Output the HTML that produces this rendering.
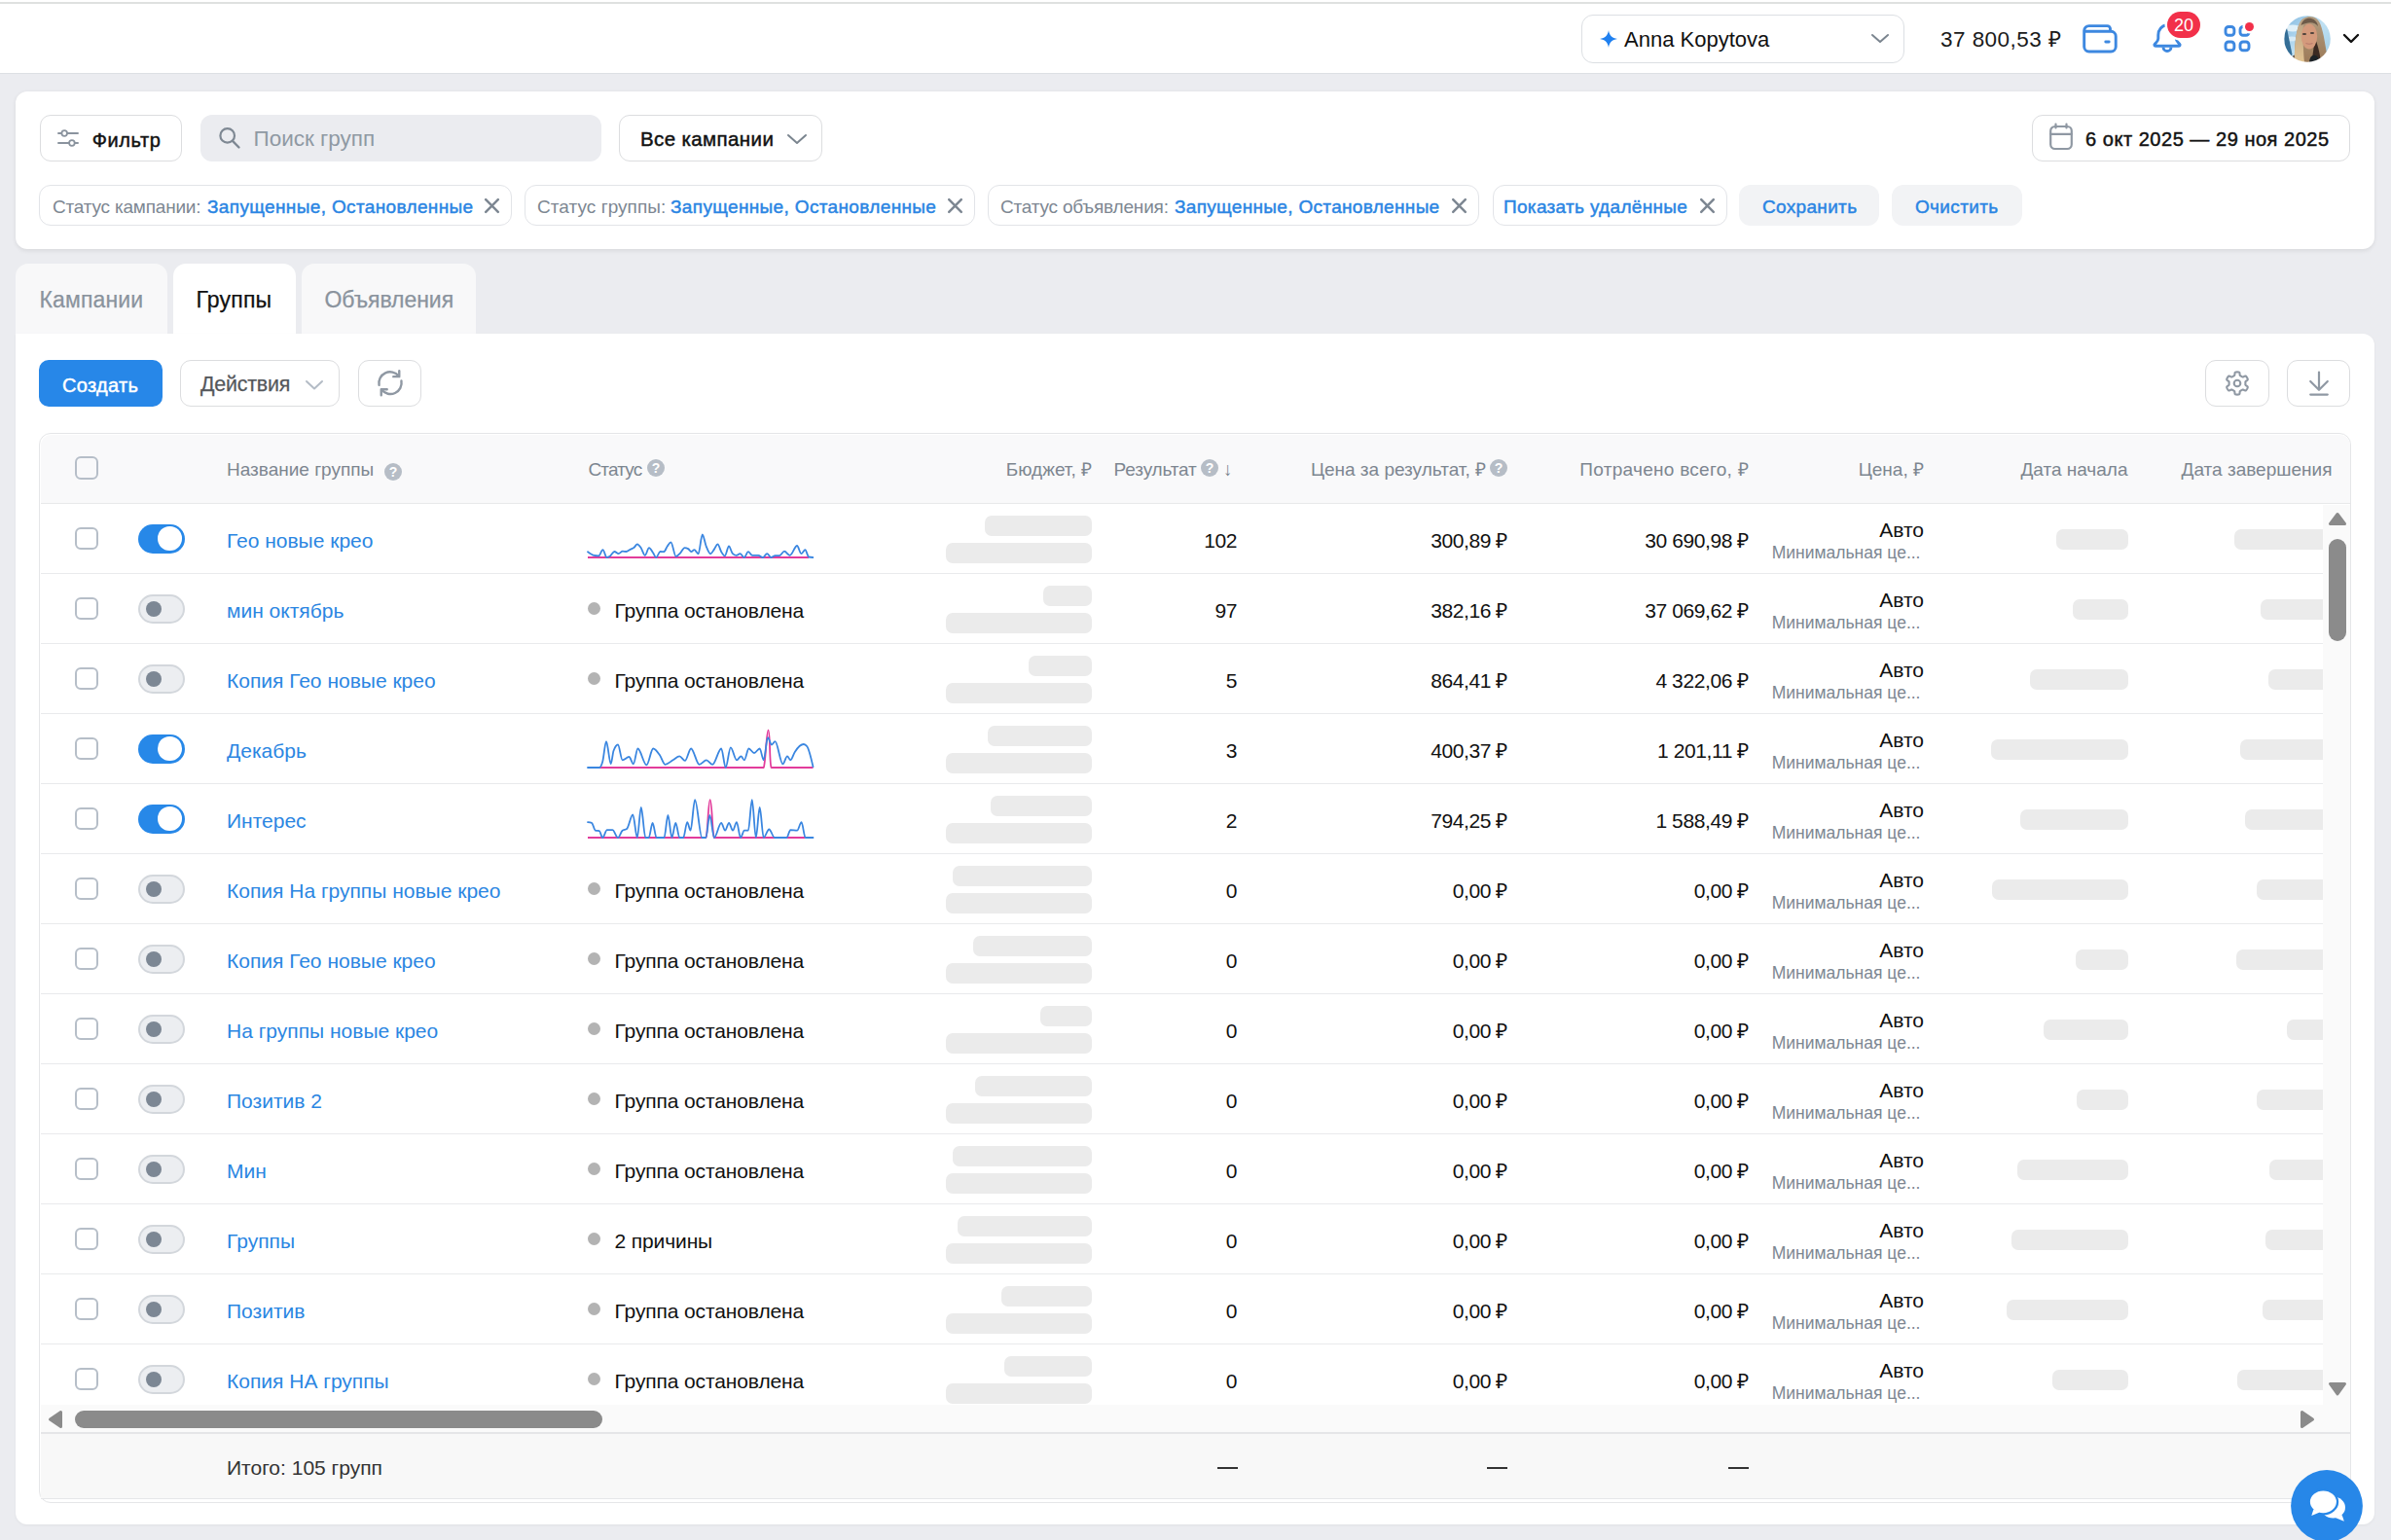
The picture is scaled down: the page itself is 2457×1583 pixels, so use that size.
<!DOCTYPE html><html><head><meta charset="utf-8"><style>html,body{margin:0;padding:0;}body{width:2457px;height:1583px;position:relative;overflow:hidden;background:#ebecf0;font-family:"Liberation Sans", sans-serif;}</style></head><body><div style="position:absolute;left:0px;top:0px;width:2457px;height:76px;background:#fff;"></div>
<div style="position:absolute;left:0px;top:2px;width:2457px;height:2px;background:#dfe1e0;"></div>
<div style="position:absolute;left:0px;top:75px;width:2457px;height:1px;background:#dde0e4;"></div>
<div style="position:absolute;left:1625px;top:15px;width:332px;height:49.5px;border:1.5px solid #dcdfe3;border-radius:12px;box-sizing:border-box;background:#fff;"></div>
<svg style="position:absolute;left:1644px;top:31px;" width="18" height="18" viewBox="0 0 18 18"><path d="M9 0 C9.8 5.5 12.5 8.2 18 9 C12.5 9.8 9.8 12.5 9 18 C8.2 12.5 5.5 9.8 0 9 C5.5 8.2 8.2 5.5 9 0Z" fill="#1f80f0"/></svg>
<div style="position:absolute;left:1669.00px;top:30.38px;font-size:22px;line-height:22px;color:#111;font-weight:400;white-space:nowrap;">Anna Kopytova</div>
<svg style="position:absolute;left:1922px;top:34px;" width="20" height="12" viewBox="0 0 20 12"><path d="M2 2 L10 9 L18 2" fill="none" stroke="#7b858f" stroke-width="2" stroke-linecap="round" stroke-linejoin="round"/></svg>
<div style="position:absolute;left:1994.00px;top:30.45px;font-size:22.5px;line-height:22.5px;color:#1a1a1a;font-weight:400;white-space:nowrap;letter-spacing:0.45px;">37 800,53 ₽</div>
<svg style="position:absolute;left:2139px;top:23px;" width="40" height="34" viewBox="0 0 40 34"><path d="M2.7 8.6 A5 5 0 0 1 7.7 3.6 H26.5 A3 3 0 0 1 29.5 6.6 V9.3 H30.2 A5 5 0 0 1 35.2 14.3 V25 A5 5 0 0 1 30.2 30 H7.7 A5 5 0 0 1 2.7 25 Z M2.7 9.3 H30" fill="none" stroke="#3d88e0" stroke-width="2.9" stroke-linejoin="round"/><path d="M24.8 20 H28.2" stroke="#3d88e0" stroke-width="2.9" stroke-linecap="round"/></svg>
<svg style="position:absolute;left:2210px;top:24px;" width="34" height="34" viewBox="0 0 34 34"><path d="M17 2 C11.5 2 7.8 6.5 7.8 12 V15.5 C7.8 17 7 18.5 5.5 20 L4.3 21.3 C3.3 22.4 4 23.3 5.5 23.3 H28.5 C30 23.3 30.7 22.4 29.7 21.3 L28.5 20 C27 18.5 26.2 17 26.2 15.5 V12 C26.2 6.5 22.5 2 17 2 Z" fill="none" stroke="#3d88e0" stroke-width="2.9" stroke-linejoin="round"/><path d="M13 24.5 A4 4 0 0 0 21 24.5" fill="none" stroke="#3d88e0" stroke-width="2.9"/></svg>
<div style="position:absolute;left:2227px;top:12px;width:34px;height:27px;background:#f2304a;border-radius:14px;box-shadow:0 0 0 2.5px #fff;"></div>
<div style="position:absolute;left:2244.00px;top:17.26px;font-size:18px;line-height:18px;color:#fff;font-weight:400;white-space:nowrap;transform:translateX(-50%);">20</div>
<svg style="position:absolute;left:2283px;top:24px;" width="36" height="34" viewBox="0 0 36 34"><rect x="4" y="3.5" width="8.9" height="8.8" rx="3" fill="none" stroke="#3d88e0" stroke-width="2.9"/><rect x="4" y="19" width="8.9" height="8.8" rx="3" fill="none" stroke="#3d88e0" stroke-width="2.9"/><rect x="19" y="19" width="9" height="8.8" rx="3" fill="none" stroke="#3d88e0" stroke-width="2.9"/><path d="M22 3.5 A3 3 0 0 0 19 6.5 V9.3 A3 3 0 0 0 22 12.3 H25 A3 3 0 0 0 28 9.3 V9" fill="none" stroke="#3d88e0" stroke-width="2.9" stroke-linecap="round"/></svg>
<div style="position:absolute;left:2307px;top:23px;width:9px;height:9px;background:#f2304a;border-radius:50%;box-shadow:0 0 0 2.5px #fff;"></div>
<svg style="position:absolute;left:2347px;top:15.5px;" width="48" height="48" viewBox="0 0 48 48"><defs><filter id="avb"><feGaussianBlur stdDeviation="0.45"/></filter><clipPath id="av"><circle cx="24" cy="24" r="23.8"/></clipPath><linearGradient id="sky" x1="0" y1="0" x2="1" y2="1"><stop offset="0" stop-color="#7fb7df"/><stop offset="0.5" stop-color="#bfe0f2"/><stop offset="1" stop-color="#9ccbe6"/></linearGradient><linearGradient id="hairL" x1="0" y1="0" x2="0" y2="1"><stop offset="0" stop-color="#b8a184"/><stop offset="1" stop-color="#e2c493"/></linearGradient><linearGradient id="hairR" x1="0" y1="0" x2="0" y2="1"><stop offset="0" stop-color="#b29c80"/><stop offset="1" stop-color="#9c7a58"/></linearGradient></defs><g clip-path="url(#av)"><g filter="url(#avb)"><rect x="-2" y="-2" width="52" height="52" fill="url(#sky)"/><ellipse cx="9" cy="13" rx="8" ry="3.5" fill="#e8f4fa" opacity="0.9"/><ellipse cx="8" cy="24" rx="6" ry="2.5" fill="#e8f4fa" opacity="0.7"/><path d="M0.5 14 L3 13 L8.5 40 L5 45 L0 44 Z" fill="#356e96"/><path d="M3 48 L6 43 L12 40 L14 48 Z" fill="#5b5046"/><path d="M11 48 C10.5 34 12 16 16 8 C18.5 3 22 1 27 1 C32 1 35.5 4 37.5 9 C41 18 43 34 45.5 48 Z" fill="url(#hairR)"/><path d="M11 48 C10.5 34 12 16 16 8 C17.5 5 19 3.5 21 2.5 C19 10 19.5 30 21 48 Z" fill="url(#hairL)"/><path d="M31.5 22 C34 28 37 38 38 48 L28 48 C30 40 31 30 31.5 22Z" fill="#3b2b22"/><ellipse cx="26" cy="21.5" rx="8.2" ry="13" fill="#d49a7c"/><path d="M17.5 10 C19 4 24 2 28 3 C32 4 34.5 7 35 11 C32 7 26 5.5 17.5 10Z" fill="#6d5a48"/><ellipse cx="21" cy="19" rx="2.2" ry="1.1" fill="#4a3e3a"/><ellipse cx="29" cy="18" rx="2.2" ry="1.1" fill="#4a3e3a"/><path d="M22.5 28.5 Q26 30 29.5 28.5" stroke="#b87a6c" stroke-width="1.2" fill="none"/><path d="M26 48 C26.5 42 29 40 33 41 C35 42 36 45 36 48 Z" fill="#1f2326"/></g></g></svg>
<svg style="position:absolute;left:2406px;top:33px;" width="20" height="14" viewBox="0 0 20 14"><path d="M3 3 L10 10 L17 3" fill="none" stroke="#111" stroke-width="2.4" stroke-linecap="round" stroke-linejoin="round"/></svg>
<div style="position:absolute;left:16px;top:94px;width:2424px;height:162px;background:#fff;border-radius:12px;box-shadow:0 1.5px 4px rgba(0,0,0,0.08);"></div>
<div style="position:absolute;left:41px;top:118px;width:146px;height:48px;border:1.7px solid #dcdddf;border-radius:11px;box-sizing:border-box;"></div>
<svg style="position:absolute;left:56px;top:128px;" width="28" height="28" viewBox="0 0 28 28"><path d="M4 9 H24 M4 19 H24" stroke="#8a939e" stroke-width="1.9" stroke-linecap="round"/><circle cx="10.2" cy="9" r="2.8" fill="#fff" stroke="#8a939e" stroke-width="1.8"/><circle cx="17.9" cy="19" r="2.8" fill="#fff" stroke="#8a939e" stroke-width="1.8"/></svg>
<div style="position:absolute;left:94.70px;top:133.57px;font-size:20px;line-height:20px;color:#111;font-weight:400;white-space:nowrap;letter-spacing:0.6px;-webkit-text-stroke:0.45px #111;">Фильтр</div>
<div style="position:absolute;left:206px;top:118px;width:412px;height:48px;background:#ebecf0;border-radius:12px;"></div>
<svg style="position:absolute;left:222px;top:128px;" width="28" height="28" viewBox="0 0 28 28"><circle cx="11.7" cy="11.4" r="7.3" fill="none" stroke="#7e8893" stroke-width="2.2"/><path d="M17 16.8 L23.5 23.5" stroke="#7e8893" stroke-width="2.4" stroke-linecap="round"/></svg>
<div style="position:absolute;left:260.50px;top:131.85px;font-size:22.5px;line-height:22.5px;color:#8f99a3;font-weight:400;white-space:nowrap;">Поиск групп</div>
<div style="position:absolute;left:636px;top:118px;width:209px;height:48px;border:1.7px solid #dcdddf;border-radius:11px;box-sizing:border-box;"></div>
<div style="position:absolute;left:658.00px;top:133.35px;font-size:20.5px;line-height:20.5px;color:#111;font-weight:400;white-space:nowrap;letter-spacing:0.38px;-webkit-text-stroke:0.45px #111;">Все кампании</div>
<svg style="position:absolute;left:806px;top:134px;" width="26" height="18" viewBox="0 0 26 18"><path d="M4 5 L13 13 L22 5" fill="none" stroke="#7b858f" stroke-width="2" stroke-linecap="round" stroke-linejoin="round"/></svg>
<div style="position:absolute;left:2088px;top:118px;width:327px;height:48px;border:1.7px solid #dcdddf;border-radius:11px;box-sizing:border-box;"></div>
<svg style="position:absolute;left:2104px;top:125px;" width="28" height="32" viewBox="0 0 28 32"><rect x="3.2" y="5" width="21.6" height="23" rx="4.5" fill="none" stroke="#8f98a3" stroke-width="2.2"/><path d="M3.2 12.8 H24.8 M8.5 2.5 V6.5 M19.5 2.5 V6.5" stroke="#8f98a3" stroke-width="2.2" stroke-linecap="round"/></svg>
<div style="position:absolute;left:2143.00px;top:133.37px;font-size:20px;line-height:20px;color:#111;font-weight:400;white-space:nowrap;letter-spacing:0.53px;-webkit-text-stroke:0.45px #111;">6 окт 2025 — 29 ноя 2025</div>
<div style="position:absolute;left:40px;top:190px;width:486px;height:42px;border:1.5px solid #e2e4e8;border-radius:12px;box-sizing:border-box;background:#fff;"></div>
<svg style="position:absolute;left:495.5px;top:202px;" width="20" height="20" viewBox="0 0 20 20"><path d="M3.2 3.2 L15.8 15.8 M15.8 3.2 L3.2 15.8" stroke="#7d8792" stroke-width="2.5" stroke-linecap="round"/></svg>
<div style="position:absolute;left:54.00px;top:202.52px;font-size:19px;line-height:19px;color:#7d8792;font-weight:400;white-space:nowrap;letter-spacing:-0.2px;">Статус кампании: </div>
<div style="position:absolute;left:213.00px;top:202.52px;font-size:19px;line-height:19px;color:#2a85e3;font-weight:400;white-space:nowrap;letter-spacing:0.36px;-webkit-text-stroke:0.45px #2a85e3;">Запущенные, Остановленные</div>
<div style="position:absolute;left:539px;top:190px;width:463px;height:42px;border:1.5px solid #e2e4e8;border-radius:12px;box-sizing:border-box;background:#fff;"></div>
<svg style="position:absolute;left:971.5px;top:202px;" width="20" height="20" viewBox="0 0 20 20"><path d="M3.2 3.2 L15.8 15.8 M15.8 3.2 L3.2 15.8" stroke="#7d8792" stroke-width="2.5" stroke-linecap="round"/></svg>
<div style="position:absolute;left:552.00px;top:202.52px;font-size:19px;line-height:19px;color:#7d8792;font-weight:400;white-space:nowrap;letter-spacing:0.05px;">Статус группы: </div>
<div style="position:absolute;left:689.00px;top:202.52px;font-size:19px;line-height:19px;color:#2a85e3;font-weight:400;white-space:nowrap;letter-spacing:0.35px;-webkit-text-stroke:0.45px #2a85e3;">Запущенные, Остановленные</div>
<div style="position:absolute;left:1015px;top:190px;width:505px;height:42px;border:1.5px solid #e2e4e8;border-radius:12px;box-sizing:border-box;background:#fff;"></div>
<svg style="position:absolute;left:1489.5px;top:202px;" width="20" height="20" viewBox="0 0 20 20"><path d="M3.2 3.2 L15.8 15.8 M15.8 3.2 L3.2 15.8" stroke="#7d8792" stroke-width="2.5" stroke-linecap="round"/></svg>
<div style="position:absolute;left:1028.00px;top:202.52px;font-size:19px;line-height:19px;color:#7d8792;font-weight:400;white-space:nowrap;letter-spacing:-0.2px;">Статус объявления: </div>
<div style="position:absolute;left:1207.00px;top:202.52px;font-size:19px;line-height:19px;color:#2a85e3;font-weight:400;white-space:nowrap;letter-spacing:0.32px;-webkit-text-stroke:0.45px #2a85e3;">Запущенные, Остановленные</div>
<div style="position:absolute;left:1534px;top:190px;width:241px;height:42px;border:1.5px solid #e2e4e8;border-radius:12px;box-sizing:border-box;background:#fff;"></div>
<svg style="position:absolute;left:1744.5px;top:202px;" width="20" height="20" viewBox="0 0 20 20"><path d="M3.2 3.2 L15.8 15.8 M15.8 3.2 L3.2 15.8" stroke="#7d8792" stroke-width="2.5" stroke-linecap="round"/></svg>
<div style="position:absolute;left:1545.00px;top:202.52px;font-size:19px;line-height:19px;color:#2a85e3;font-weight:400;white-space:nowrap;letter-spacing:0.32px;-webkit-text-stroke:0.45px #2a85e3;">Показать удалённые</div>
<div style="position:absolute;left:1787px;top:190px;width:144px;height:42px;background:#f2f3f5;border-radius:12px;"></div>
<div style="position:absolute;left:1811.00px;top:202.52px;font-size:19px;line-height:19px;color:#2a85e3;font-weight:400;white-space:nowrap;letter-spacing:0.33px;-webkit-text-stroke:0.45px #2a85e3;">Сохранить</div>
<div style="position:absolute;left:1944px;top:190px;width:134px;height:42px;background:#f2f3f5;border-radius:12px;"></div>
<div style="position:absolute;left:1968.00px;top:202.52px;font-size:19px;line-height:19px;color:#2a85e3;font-weight:400;white-space:nowrap;letter-spacing:0.34px;-webkit-text-stroke:0.45px #2a85e3;">Очистить</div>
<div style="position:absolute;left:16px;top:271px;width:156px;height:79px;background:#f8f8f9;border-radius:13px 13px 0 0;"></div>
<div style="position:absolute;left:178px;top:271px;width:126px;height:79px;background:#fff;border-radius:13px 13px 0 0;"></div>
<div style="position:absolute;left:310px;top:271px;width:179px;height:79px;background:#f8f8f9;border-radius:13px 13px 0 0;"></div>
<div style="position:absolute;left:40.50px;top:297.03px;font-size:23px;line-height:23px;color:#8a939d;font-weight:400;white-space:nowrap;letter-spacing:0.15px;-webkit-text-stroke:0.25px #8a939d;">Кампании</div>
<div style="position:absolute;left:201.50px;top:297.03px;font-size:23px;line-height:23px;color:#111;font-weight:400;white-space:nowrap;letter-spacing:0.2px;-webkit-text-stroke:0.25px #111;">Группы</div>
<div style="position:absolute;left:333.50px;top:297.03px;font-size:23px;line-height:23px;color:#8a939d;font-weight:400;white-space:nowrap;letter-spacing:-0.05px;-webkit-text-stroke:0.25px #8a939d;">Объявления</div>
<div style="position:absolute;left:16px;top:343px;width:2424px;height:1224px;background:#fff;border-radius:0 12px 12px 12px;box-shadow:0 1px 3px rgba(0,0,0,0.05);"></div>
<div style="position:absolute;left:40px;top:370px;width:127px;height:48px;background:#2787e8;border-radius:10px;"></div>
<div style="position:absolute;left:64.00px;top:386.07px;font-size:20px;line-height:20px;color:#fff;font-weight:400;white-space:nowrap;letter-spacing:0.3px;-webkit-text-stroke:0.45px #fff;">Создать</div>
<div style="position:absolute;left:185px;top:370px;width:164px;height:48px;border:1.7px solid #dcdddf;border-radius:11px;box-sizing:border-box;"></div>
<div style="position:absolute;left:206.00px;top:384.68px;font-size:21.4px;line-height:21.4px;color:#54575b;font-weight:400;white-space:nowrap;letter-spacing:-0.2px;-webkit-text-stroke:0.25px #54575b;">Действия</div>
<svg style="position:absolute;left:310px;top:387px;" width="26" height="18" viewBox="0 0 26 18"><path d="M5 5 L13 12.5 L21 5" fill="none" stroke="#b4bcc6" stroke-width="2" stroke-linecap="round" stroke-linejoin="round"/></svg>
<div style="position:absolute;left:368px;top:370px;width:65px;height:48px;border:1.7px solid #dcdddf;border-radius:11px;box-sizing:border-box;"></div>
<svg style="position:absolute;left:385px;top:379px;" width="32" height="30" viewBox="0 0 32 30"><g transform="translate(16 15) scale(1.09) translate(-16 -15.3)"><path d="M5.5 17 A10.5 10.5 0 0 1 24 8.5" fill="none" stroke="#8f98a3" stroke-width="2.2" stroke-linecap="round"/><path d="M26.5 13 A10.5 10.5 0 0 1 8 21.5" fill="none" stroke="#8f98a3" stroke-width="2.2" stroke-linecap="round"/><path d="M24.5 3.5 V9 H19" fill="none" stroke="#8f98a3" stroke-width="2.2" stroke-linecap="round" stroke-linejoin="round"/><path d="M7.5 26.5 V21 H13" fill="none" stroke="#8f98a3" stroke-width="2.2" stroke-linecap="round" stroke-linejoin="round"/></g></svg>
<div style="position:absolute;left:2266px;top:370px;width:66px;height:48px;border:1.7px solid #dcdddf;border-radius:11px;box-sizing:border-box;"></div>
<div style="position:absolute;left:2350px;top:370px;width:65px;height:48px;border:1.7px solid #dcdddf;border-radius:11px;box-sizing:border-box;"></div>
<svg style="position:absolute;left:2283px;top:377.5px;" width="32" height="32" viewBox="0 0 32 32"><path d="M24.40 16.00 L24.40 15.71 L24.38 15.41 L24.37 15.12 L24.36 14.83 L24.39 14.52 L24.59 14.17 L25.20 13.71 L26.11 13.10 L26.67 12.53 L26.79 12.07 L26.72 11.67 L26.59 11.29 L26.42 10.92 L26.24 10.55 L26.05 10.20 L25.84 9.85 L25.61 9.52 L25.37 9.19 L25.11 8.88 L24.79 8.62 L24.33 8.50 L23.57 8.69 L22.59 9.18 L21.88 9.47 L21.48 9.47 L21.20 9.35 L20.94 9.19 L20.70 9.03 L20.45 8.88 L20.20 8.73 L19.94 8.58 L19.68 8.45 L19.42 8.31 L19.16 8.18 L18.91 7.99 L18.71 7.64 L18.61 6.89 L18.54 5.79 L18.33 5.03 L17.99 4.69 L17.61 4.55 L17.21 4.48 L16.81 4.43 L16.40 4.41 L16.00 4.40 L15.60 4.41 L15.19 4.43 L14.79 4.48 L14.39 4.55 L14.01 4.69 L13.67 5.03 L13.46 5.79 L13.39 6.89 L13.29 7.64 L13.09 7.99 L12.84 8.18 L12.58 8.31 L12.32 8.45 L12.06 8.58 L11.80 8.73 L11.55 8.88 L11.30 9.03 L11.06 9.19 L10.80 9.35 L10.52 9.47 L10.12 9.47 L9.41 9.18 L8.43 8.69 L7.67 8.50 L7.21 8.62 L6.89 8.88 L6.63 9.19 L6.39 9.52 L6.16 9.85 L5.95 10.20 L5.76 10.55 L5.58 10.92 L5.41 11.29 L5.28 11.67 L5.21 12.07 L5.33 12.53 L5.89 13.10 L6.80 13.71 L7.41 14.17 L7.61 14.52 L7.64 14.83 L7.63 15.12 L7.62 15.41 L7.60 15.71 L7.60 16.00 L7.60 16.29 L7.62 16.59 L7.63 16.88 L7.64 17.17 L7.61 17.48 L7.41 17.83 L6.80 18.29 L5.89 18.90 L5.33 19.47 L5.21 19.93 L5.28 20.33 L5.41 20.71 L5.58 21.08 L5.76 21.45 L5.95 21.80 L6.16 22.15 L6.39 22.48 L6.63 22.81 L6.89 23.12 L7.21 23.38 L7.67 23.50 L8.43 23.31 L9.41 22.82 L10.12 22.53 L10.52 22.53 L10.80 22.65 L11.06 22.81 L11.30 22.97 L11.55 23.12 L11.80 23.27 L12.06 23.42 L12.32 23.55 L12.58 23.69 L12.84 23.82 L13.09 24.01 L13.29 24.36 L13.39 25.11 L13.46 26.21 L13.67 26.97 L14.01 27.31 L14.39 27.45 L14.79 27.52 L15.19 27.57 L15.60 27.59 L16.00 27.60 L16.40 27.59 L16.81 27.57 L17.21 27.52 L17.61 27.45 L17.99 27.31 L18.33 26.97 L18.54 26.21 L18.61 25.11 L18.71 24.36 L18.91 24.01 L19.16 23.82 L19.42 23.69 L19.68 23.55 L19.94 23.42 L20.20 23.27 L20.45 23.12 L20.70 22.97 L20.94 22.81 L21.20 22.65 L21.48 22.53 L21.88 22.53 L22.59 22.82 L23.57 23.31 L24.33 23.50 L24.79 23.38 L25.11 23.12 L25.37 22.81 L25.61 22.48 L25.84 22.15 L26.05 21.80 L26.24 21.45 L26.42 21.08 L26.59 20.71 L26.72 20.33 L26.79 19.93 L26.67 19.47 L26.11 18.90 L25.20 18.29 L24.59 17.83 L24.39 17.48 L24.36 17.17 L24.37 16.88 L24.38 16.59 L24.40 16.29 Z" fill="none" stroke="#8f98a3" stroke-width="2.1" stroke-linejoin="round"/><circle cx="16" cy="16" r="3.3" fill="none" stroke="#8f98a3" stroke-width="2.1"/></svg>
<svg style="position:absolute;left:2367px;top:372px;" width="32" height="40" viewBox="0 0 32 40"><path d="M16 10.5 V28.5 M7.2 20 L16 28.8 L24.8 20 M7.2 33.6 H24.8" fill="none" stroke="#8f98a3" stroke-width="2.2" stroke-linecap="round" stroke-linejoin="round"/></svg>
<div style="position:absolute;left:40px;top:445px;width:2376px;height:1099.5px;border:1.5px solid #e5e6e8;border-radius:12px;box-sizing:border-box;background:#fff;"></div>
<div style="position:absolute;left:41.5px;top:446.5px;width:2373.0px;height:70.5px;background:#f9f9fa;border-radius:11px 11px 0 0;"></div>
<div style="position:absolute;left:41.5px;top:517px;width:2373.0px;height:1.2000000000000455px;background:#e8e9ea;"></div>
<div style="position:absolute;left:77.0px;top:469.0px;width:23.599999999999994px;height:23.600000000000023px;border:2px solid #b6bec8;border-radius:6px;box-sizing:border-box;"></div>
<div style="position:absolute;left:233.00px;top:473.32px;font-size:19px;line-height:19px;color:#7d8690;font-weight:400;white-space:nowrap;">Название группы</div>
<svg style="position:absolute;left:395px;top:476px;" width="18" height="18" viewBox="0 0 18 18"><circle cx="9.0" cy="9.0" r="9.0" fill="#b6bdc6"/><text x="9.0" y="13.86" text-anchor="middle" font-family="Liberation Sans" font-weight="700" font-size="14.040000000000001" fill="#fff">?</text></svg>
<div style="position:absolute;left:604.50px;top:473.32px;font-size:19px;line-height:19px;color:#7d8690;font-weight:400;white-space:nowrap;letter-spacing:-0.85px;">Статус</div>
<svg style="position:absolute;left:665px;top:472px;" width="18" height="18" viewBox="0 0 18 18"><circle cx="9.0" cy="9.0" r="9.0" fill="#b6bdc6"/><text x="9.0" y="13.86" text-anchor="middle" font-family="Liberation Sans" font-weight="700" font-size="14.040000000000001" fill="#fff">?</text></svg>
<div style="position:absolute;left:322.00px;width:800px;text-align:right;top:473.32px;font-size:19px;line-height:19px;color:#7d8690;font-weight:400;white-space:nowrap;">Бюджет, ₽</div>
<div style="position:absolute;left:1144.60px;top:473.32px;font-size:19px;line-height:19px;color:#7d8690;font-weight:400;white-space:nowrap;letter-spacing:-0.15px;">Результат</div>
<svg style="position:absolute;left:1234px;top:472px;" width="18" height="18" viewBox="0 0 18 18"><circle cx="9.0" cy="9.0" r="9.0" fill="#b6bdc6"/><text x="9.0" y="13.86" text-anchor="middle" font-family="Liberation Sans" font-weight="700" font-size="14.040000000000001" fill="#fff">?</text></svg>
<div style="position:absolute;left:1257.00px;top:473.32px;font-size:19px;line-height:19px;color:#7d8690;font-weight:400;white-space:nowrap;">↓</div>
<div style="position:absolute;left:727.00px;width:800px;text-align:right;top:473.32px;font-size:19px;line-height:19px;color:#7d8690;font-weight:400;white-space:nowrap;">Цена за результат, ₽</div>
<svg style="position:absolute;left:1531px;top:472px;" width="18" height="18" viewBox="0 0 18 18"><circle cx="9.0" cy="9.0" r="9.0" fill="#b6bdc6"/><text x="9.0" y="13.86" text-anchor="middle" font-family="Liberation Sans" font-weight="700" font-size="14.040000000000001" fill="#fff">?</text></svg>
<div style="position:absolute;left:997.00px;width:800px;text-align:right;top:473.32px;font-size:19px;line-height:19px;color:#7d8690;font-weight:400;white-space:nowrap;letter-spacing:0.28px;margin-right:-0.28px;">Потрачено всего, ₽</div>
<div style="position:absolute;left:1177.00px;width:800px;text-align:right;top:473.32px;font-size:19px;line-height:19px;color:#7d8690;font-weight:400;white-space:nowrap;">Цена, ₽</div>
<div style="position:absolute;left:1386.50px;width:800px;text-align:right;top:473.32px;font-size:19px;line-height:19px;color:#7d8690;font-weight:400;white-space:nowrap;">Дата начала</div>
<div style="position:absolute;left:2241.60px;top:473.32px;font-size:19px;line-height:19px;color:#7d8690;font-weight:400;white-space:nowrap;">Дата завершения</div>
<div style="position:absolute;left:41.5px;top:588.5px;width:2345.5px;height:1.5px;background:#e9eaec;"></div>
<div style="position:absolute;left:77.0px;top:541.7px;width:23.599999999999994px;height:23.59999999999991px;border:2px solid #b6bec8;border-radius:6px;box-sizing:border-box;"></div>
<div style="position:absolute;left:142px;top:538.5px;width:48px;height:30.0px;background:#2788e8;border-radius:15px;"></div>
<div style="position:absolute;left:162.3px;top:541.4px;width:24.5px;height:24.5px;background:#fff;border-radius:50%;"></div>
<div style="position:absolute;left:233.00px;top:545.22px;font-size:21px;line-height:21px;color:#2b86e2;font-weight:400;white-space:nowrap;">Гео новые крео</div>
<svg style="position:absolute;left:600px;top:528.4px;" width="240" height="50" viewBox="0 0 240 50"><path d="M4.0 45 H231.1" fill="none" stroke="#e23c9b" stroke-width="1.8" stroke-linejoin="round"/><path d="M4.00 39.20 C6.17 40.82 8.33 42.44 10.50 42.90 C12.07 43.23 13.63 43.40 15.20 43.40 C16.60 43.40 18.00 37.20 19.40 37.20 C20.80 37.20 22.20 45.00 23.60 45.00 C24.77 45.00 25.93 44.23 27.10 43.40 C28.53 42.38 29.97 39.00 31.40 39.00 C32.80 39.00 34.20 41.10 35.60 41.10 C37.00 41.10 38.40 38.70 39.80 38.70 C41.00 38.70 42.20 39.00 43.40 39.00 C44.97 39.00 46.53 37.36 48.10 36.60 C49.17 36.08 50.23 35.88 51.30 35.10 C52.50 34.22 53.70 31.40 54.90 31.40 C56.13 31.40 57.37 33.37 58.60 35.10 C60.00 37.06 61.40 42.90 62.80 42.90 C64.20 42.90 65.60 35.10 67.00 35.10 C68.37 35.10 69.73 38.41 71.10 40.30 C72.17 41.77 73.23 45.00 74.30 45.00 C75.67 45.00 77.03 39.00 78.40 39.00 C79.63 39.00 80.87 39.20 82.10 39.20 C83.33 39.20 84.57 35.17 85.80 33.50 C87.00 31.88 88.20 29.30 89.40 29.30 C91.13 29.30 92.87 44.00 94.60 44.00 C96.00 44.00 97.40 42.16 98.80 40.80 C100.37 39.27 101.93 35.10 103.50 35.10 C104.73 35.10 105.97 35.43 107.20 36.10 C108.23 36.66 109.27 39.20 110.30 39.20 C111.37 39.20 112.43 37.20 113.50 37.20 C114.87 37.20 116.23 41.30 117.60 41.30 C119.00 41.30 120.40 21.50 121.80 21.50 C123.03 21.50 124.27 29.90 125.50 33.00 C127.07 36.94 128.63 41.30 130.20 41.30 C131.43 41.30 132.67 38.28 133.90 36.60 C135.10 34.97 136.30 31.40 137.50 31.40 C138.73 31.40 139.97 37.19 141.20 39.20 C142.40 41.16 143.60 43.40 144.80 43.40 C146.20 43.40 147.60 33.50 149.00 33.50 C150.23 33.50 151.47 39.57 152.70 40.80 C154.10 42.20 155.50 42.90 156.90 42.90 C158.10 42.90 159.30 41.10 160.50 41.10 C161.90 41.10 163.30 45.00 164.70 45.00 C166.10 45.00 167.50 39.20 168.90 39.20 C170.27 39.20 171.63 42.90 173.00 42.90 C175.10 42.90 177.20 42.90 179.30 42.90 C180.87 42.90 182.43 45.00 184.00 45.00 C185.40 45.00 186.80 41.10 188.20 41.10 C189.60 41.10 191.00 45.00 192.40 45.00 C193.80 45.00 195.20 43.20 196.60 43.20 C198.00 43.20 199.40 43.20 200.80 43.20 C202.53 43.20 204.27 38.70 206.00 38.70 C207.90 38.70 209.80 42.90 211.70 42.90 C214.17 42.90 216.63 33.00 219.10 33.00 C220.50 33.00 221.90 41.10 223.30 41.10 C224.67 41.10 226.03 37.20 227.40 37.20 C228.63 37.20 229.87 44.21 231.10 44.50 C232.50 44.83 233.90 44.92 235.30 45.00" fill="none" stroke="#3a86e0" stroke-width="1.8" stroke-linejoin="round" stroke-linecap="round"/></svg>
<div style="position:absolute;left:1012px;top:530.0px;width:110px;height:21.0px;background:#ebebeb;border-radius:7px;"></div>
<div style="position:absolute;left:972px;top:558.0px;width:150px;height:21.0px;background:#ebebeb;border-radius:7px;"></div>
<div style="position:absolute;left:471.00px;width:800px;text-align:right;top:545.22px;font-size:21px;line-height:21px;color:#111;font-weight:400;white-space:nowrap;letter-spacing:-0.4px;margin-right:-0.4px;">102</div>
<div style="position:absolute;left:749.00px;width:800px;text-align:right;top:545.22px;font-size:21px;line-height:21px;color:#111;font-weight:400;white-space:nowrap;letter-spacing:-0.4px;margin-right:-0.4px;">300,89 ₽</div>
<div style="position:absolute;left:997.00px;width:800px;text-align:right;top:545.22px;font-size:21px;line-height:21px;color:#111;font-weight:400;white-space:nowrap;letter-spacing:-0.4px;margin-right:-0.4px;">30 690,98 ₽</div>
<div style="position:absolute;left:1177.00px;width:800px;text-align:right;top:534.02px;font-size:21px;line-height:21px;color:#111;font-weight:400;white-space:nowrap;">Авто</div>
<div style="position:absolute;left:1173.50px;width:800px;text-align:right;top:560.19px;font-size:17.5px;line-height:17.5px;color:#7d8792;font-weight:400;white-space:nowrap;">Минимальная це...</div>
<div style="position:absolute;left:2113px;top:544.0px;width:74px;height:20.5px;background:#ebebeb;border-radius:7px;"></div>
<div style="position:absolute;left:2296px;top:544.0px;width:91px;height:20.5px;background:#ebebeb;border-radius:7px 0 0 7px;"></div>
<div style="position:absolute;left:41.5px;top:660.5px;width:2345.5px;height:1.5px;background:#e9eaec;"></div>
<div style="position:absolute;left:77.0px;top:613.7px;width:23.599999999999994px;height:23.59999999999991px;border:2px solid #b6bec8;border-radius:6px;box-sizing:border-box;"></div>
<div style="position:absolute;left:142px;top:610.5px;width:48px;height:30.0px;background:#eceef1;border:2.2px solid #d3d7dc;border-radius:15px;box-sizing:border-box;"></div>
<div style="position:absolute;left:149.5px;top:617.5px;width:16.0px;height:16.0px;background:#7c8794;border-radius:50%;"></div>
<div style="position:absolute;left:233.00px;top:617.22px;font-size:21px;line-height:21px;color:#2b86e2;font-weight:400;white-space:nowrap;">мин октябрь</div>
<div style="position:absolute;left:603.5px;top:619.0px;width:13.0px;height:13.0px;background:#b3b3b3;border-radius:50%;"></div>
<div style="position:absolute;left:631.50px;top:617.22px;font-size:21px;line-height:21px;color:#111;font-weight:400;white-space:nowrap;letter-spacing:-0.12px;">Группа остановлена</div>
<div style="position:absolute;left:1072px;top:602.0px;width:50px;height:21.0px;background:#ebebeb;border-radius:7px;"></div>
<div style="position:absolute;left:972px;top:630.0px;width:150px;height:21.0px;background:#ebebeb;border-radius:7px;"></div>
<div style="position:absolute;left:471.00px;width:800px;text-align:right;top:617.22px;font-size:21px;line-height:21px;color:#111;font-weight:400;white-space:nowrap;letter-spacing:-0.4px;margin-right:-0.4px;">97</div>
<div style="position:absolute;left:749.00px;width:800px;text-align:right;top:617.22px;font-size:21px;line-height:21px;color:#111;font-weight:400;white-space:nowrap;letter-spacing:-0.4px;margin-right:-0.4px;">382,16 ₽</div>
<div style="position:absolute;left:997.00px;width:800px;text-align:right;top:617.22px;font-size:21px;line-height:21px;color:#111;font-weight:400;white-space:nowrap;letter-spacing:-0.4px;margin-right:-0.4px;">37 069,62 ₽</div>
<div style="position:absolute;left:1177.00px;width:800px;text-align:right;top:606.02px;font-size:21px;line-height:21px;color:#111;font-weight:400;white-space:nowrap;">Авто</div>
<div style="position:absolute;left:1173.50px;width:800px;text-align:right;top:632.19px;font-size:17.5px;line-height:17.5px;color:#7d8792;font-weight:400;white-space:nowrap;">Минимальная це...</div>
<div style="position:absolute;left:2130px;top:616.0px;width:57px;height:20.5px;background:#ebebeb;border-radius:7px;"></div>
<div style="position:absolute;left:2323px;top:616.0px;width:64px;height:20.5px;background:#ebebeb;border-radius:7px 0 0 7px;"></div>
<div style="position:absolute;left:41.5px;top:732.5px;width:2345.5px;height:1.5px;background:#e9eaec;"></div>
<div style="position:absolute;left:77.0px;top:685.7px;width:23.599999999999994px;height:23.59999999999991px;border:2px solid #b6bec8;border-radius:6px;box-sizing:border-box;"></div>
<div style="position:absolute;left:142px;top:682.5px;width:48px;height:30.0px;background:#eceef1;border:2.2px solid #d3d7dc;border-radius:15px;box-sizing:border-box;"></div>
<div style="position:absolute;left:149.5px;top:689.5px;width:16.0px;height:16.0px;background:#7c8794;border-radius:50%;"></div>
<div style="position:absolute;left:233.00px;top:689.22px;font-size:21px;line-height:21px;color:#2b86e2;font-weight:400;white-space:nowrap;">Копия Гео новые крео</div>
<div style="position:absolute;left:603.5px;top:691.0px;width:13.0px;height:13.0px;background:#b3b3b3;border-radius:50%;"></div>
<div style="position:absolute;left:631.50px;top:689.22px;font-size:21px;line-height:21px;color:#111;font-weight:400;white-space:nowrap;letter-spacing:-0.12px;">Группа остановлена</div>
<div style="position:absolute;left:1057px;top:674.0px;width:65px;height:21.0px;background:#ebebeb;border-radius:7px;"></div>
<div style="position:absolute;left:972px;top:702.0px;width:150px;height:21.0px;background:#ebebeb;border-radius:7px;"></div>
<div style="position:absolute;left:471.00px;width:800px;text-align:right;top:689.22px;font-size:21px;line-height:21px;color:#111;font-weight:400;white-space:nowrap;letter-spacing:-0.4px;margin-right:-0.4px;">5</div>
<div style="position:absolute;left:749.00px;width:800px;text-align:right;top:689.22px;font-size:21px;line-height:21px;color:#111;font-weight:400;white-space:nowrap;letter-spacing:-0.4px;margin-right:-0.4px;">864,41 ₽</div>
<div style="position:absolute;left:997.00px;width:800px;text-align:right;top:689.22px;font-size:21px;line-height:21px;color:#111;font-weight:400;white-space:nowrap;letter-spacing:-0.4px;margin-right:-0.4px;">4 322,06 ₽</div>
<div style="position:absolute;left:1177.00px;width:800px;text-align:right;top:678.02px;font-size:21px;line-height:21px;color:#111;font-weight:400;white-space:nowrap;">Авто</div>
<div style="position:absolute;left:1173.50px;width:800px;text-align:right;top:704.19px;font-size:17.5px;line-height:17.5px;color:#7d8792;font-weight:400;white-space:nowrap;">Минимальная це...</div>
<div style="position:absolute;left:2086px;top:688.0px;width:101px;height:20.5px;background:#ebebeb;border-radius:7px;"></div>
<div style="position:absolute;left:2331px;top:688.0px;width:56px;height:20.5px;background:#ebebeb;border-radius:7px 0 0 7px;"></div>
<div style="position:absolute;left:41.5px;top:804.5px;width:2345.5px;height:1.5px;background:#e9eaec;"></div>
<div style="position:absolute;left:77.0px;top:757.7px;width:23.599999999999994px;height:23.59999999999991px;border:2px solid #b6bec8;border-radius:6px;box-sizing:border-box;"></div>
<div style="position:absolute;left:142px;top:754.5px;width:48px;height:30.0px;background:#2788e8;border-radius:15px;"></div>
<div style="position:absolute;left:162.3px;top:757.4px;width:24.5px;height:24.5px;background:#fff;border-radius:50%;"></div>
<div style="position:absolute;left:233.00px;top:761.22px;font-size:21px;line-height:21px;color:#2b86e2;font-weight:400;white-space:nowrap;">Декабрь</div>
<svg style="position:absolute;left:600px;top:744px;" width="240" height="50" viewBox="0 0 240 50"><path d="M15.9 45 H184.7 C186.7 42 187.5 6.3 189.5 6.3 C191.5 6.3 190.6 42 192.6 45 H235.5" fill="none" stroke="#e23c9b" stroke-width="1.8" stroke-linejoin="round"/><path d="M4.00 45.00 C7.97 45.00 11.93 45.00 15.90 45.00 C17.00 45.00 18.10 42.88 19.20 39.00 C20.47 34.53 21.73 18.10 23.00 18.10 C24.57 18.10 26.13 41.30 27.70 41.30 C28.63 41.30 29.57 30.27 30.50 27.70 C32.00 23.57 33.50 21.50 35.00 21.50 C36.53 21.50 38.07 37.30 39.60 37.30 C41.87 37.30 44.13 34.00 46.40 34.00 C47.90 34.00 49.40 41.30 50.90 41.30 C52.40 41.30 53.90 25.50 55.40 25.50 C58.40 25.50 61.40 42.40 64.40 42.40 C66.67 42.40 68.93 25.50 71.20 25.50 C73.47 25.50 75.73 29.06 78.00 32.20 C79.87 34.79 81.73 41.80 83.60 41.80 C86.23 41.80 88.87 38.81 91.50 37.30 C93.77 36.00 96.03 33.40 98.30 33.40 C100.17 33.40 102.03 37.90 103.90 37.90 C105.97 37.90 108.03 25.50 110.10 25.50 C112.93 25.50 115.77 41.80 118.60 41.80 C121.03 41.80 123.47 37.30 125.90 37.30 C128.00 37.30 130.10 41.80 132.20 41.80 C135.20 41.80 138.20 25.50 141.20 25.50 C142.70 25.50 144.20 45.00 145.70 45.00 C147.40 45.00 149.10 24.30 150.80 24.30 C152.87 24.30 154.93 37.30 157.00 37.30 C158.50 37.30 160.00 33.40 161.50 33.40 C162.63 33.40 163.77 37.30 164.90 37.30 C166.40 37.30 167.90 25.50 169.40 25.50 C171.27 25.50 173.13 30.00 175.00 30.00 C176.90 30.00 178.80 25.50 180.70 25.50 C182.03 25.50 183.37 37.30 184.70 37.30 C186.13 37.30 187.57 14.20 189.00 14.20 C190.33 14.20 191.67 21.50 193.00 21.50 C194.17 21.50 195.33 18.10 196.50 18.10 C199.13 18.10 201.77 41.30 204.40 41.30 C205.93 41.30 207.47 33.40 209.00 33.40 C210.10 33.40 211.20 37.30 212.30 37.30 C213.80 37.30 215.30 31.20 216.80 28.90 C219.83 24.24 222.87 21.00 225.90 21.00 C227.03 21.00 228.17 21.73 229.30 23.20 C231.37 25.87 233.43 34.99 235.50 44.10" fill="none" stroke="#3a86e0" stroke-width="1.8" stroke-linejoin="round" stroke-linecap="round"/></svg>
<div style="position:absolute;left:1015px;top:746.0px;width:107px;height:21.0px;background:#ebebeb;border-radius:7px;"></div>
<div style="position:absolute;left:972px;top:774.0px;width:150px;height:21.0px;background:#ebebeb;border-radius:7px;"></div>
<div style="position:absolute;left:471.00px;width:800px;text-align:right;top:761.22px;font-size:21px;line-height:21px;color:#111;font-weight:400;white-space:nowrap;letter-spacing:-0.4px;margin-right:-0.4px;">3</div>
<div style="position:absolute;left:749.00px;width:800px;text-align:right;top:761.22px;font-size:21px;line-height:21px;color:#111;font-weight:400;white-space:nowrap;letter-spacing:-0.4px;margin-right:-0.4px;">400,37 ₽</div>
<div style="position:absolute;left:997.00px;width:800px;text-align:right;top:761.22px;font-size:21px;line-height:21px;color:#111;font-weight:400;white-space:nowrap;letter-spacing:-0.4px;margin-right:-0.4px;">1 201,11 ₽</div>
<div style="position:absolute;left:1177.00px;width:800px;text-align:right;top:750.02px;font-size:21px;line-height:21px;color:#111;font-weight:400;white-space:nowrap;">Авто</div>
<div style="position:absolute;left:1173.50px;width:800px;text-align:right;top:776.19px;font-size:17.5px;line-height:17.5px;color:#7d8792;font-weight:400;white-space:nowrap;">Минимальная це...</div>
<div style="position:absolute;left:2046px;top:760.0px;width:141px;height:20.5px;background:#ebebeb;border-radius:7px;"></div>
<div style="position:absolute;left:2302px;top:760.0px;width:85px;height:20.5px;background:#ebebeb;border-radius:7px 0 0 7px;"></div>
<div style="position:absolute;left:41.5px;top:876.5px;width:2345.5px;height:1.5px;background:#e9eaec;"></div>
<div style="position:absolute;left:77.0px;top:829.7px;width:23.599999999999994px;height:23.59999999999991px;border:2px solid #b6bec8;border-radius:6px;box-sizing:border-box;"></div>
<div style="position:absolute;left:142px;top:826.5px;width:48px;height:30.0px;background:#2788e8;border-radius:15px;"></div>
<div style="position:absolute;left:162.3px;top:829.4px;width:24.5px;height:24.5px;background:#fff;border-radius:50%;"></div>
<div style="position:absolute;left:233.00px;top:833.22px;font-size:21px;line-height:21px;color:#2b86e2;font-weight:400;white-space:nowrap;">Интерес</div>
<svg style="position:absolute;left:600px;top:816px;" width="240" height="50" viewBox="0 0 240 50"><path d="M4.0 45 H125.4 C127.4 42 127.7 6.1 129.7 6.1 C131.7 6.1 131.9 42 133.9 45 H227.6" fill="none" stroke="#e23c9b" stroke-width="1.8" stroke-linejoin="round"/><path d="M4.00 29.20 C5.33 29.30 6.67 29.40 8.00 29.80 C9.30 30.19 10.60 37.38 11.90 37.70 C13.23 38.03 14.57 37.87 15.90 38.20 C17.00 38.48 18.10 45.00 19.20 45.00 C20.73 45.00 22.27 37.10 23.80 37.10 C25.67 37.10 27.53 37.10 29.40 37.10 C31.27 37.10 33.13 45.00 35.00 45.00 C36.53 45.00 38.07 38.86 39.60 37.70 C41.10 36.57 42.60 37.13 44.10 36.00 C46.17 34.44 48.23 21.30 50.30 21.30 C51.80 21.30 53.30 45.00 54.80 45.00 C56.13 45.00 57.47 14.00 58.80 14.00 C60.30 14.00 61.80 45.00 63.30 45.00 C64.43 45.00 65.57 45.00 66.70 45.00 C68.00 45.00 69.30 29.80 70.60 29.80 C71.93 29.80 73.27 45.00 74.60 45.00 C77.23 45.00 79.87 45.00 82.50 45.00 C83.80 45.00 85.10 21.90 86.40 21.90 C87.73 21.90 89.07 45.00 90.40 45.00 C91.70 45.00 93.00 29.80 94.30 29.80 C95.63 29.80 96.97 45.00 98.30 45.00 C99.60 45.00 100.90 45.00 102.20 45.00 C103.53 45.00 104.87 29.20 106.20 29.20 C107.33 29.20 108.47 37.70 109.60 37.70 C111.10 37.70 112.60 6.10 114.10 6.10 C116.53 6.10 118.97 45.00 121.40 45.00 C122.73 45.00 124.07 45.00 125.40 45.00 C126.70 45.00 128.00 21.90 129.30 21.90 C130.83 21.90 132.37 45.00 133.90 45.00 C136.33 45.00 138.77 29.80 141.20 29.80 C142.50 29.80 143.80 37.70 145.10 37.70 C146.43 37.70 147.77 29.80 149.10 29.80 C150.40 29.80 151.70 37.70 153.00 37.70 C154.33 37.70 155.67 29.20 157.00 29.20 C158.33 29.20 159.67 45.00 161.00 45.00 C162.30 45.00 163.60 37.70 164.90 37.70 C166.23 37.70 167.57 37.70 168.90 37.70 C170.20 37.70 171.50 6.10 172.80 6.10 C174.13 6.10 175.47 45.00 176.80 45.00 C178.10 45.00 179.40 14.00 180.70 14.00 C182.03 14.00 183.37 45.00 184.70 45.00 C186.57 45.00 188.43 36.50 190.30 36.50 C192.20 36.50 194.10 45.00 196.00 45.00 C200.13 45.00 204.27 45.00 208.40 45.00 C209.70 45.00 211.00 37.10 212.30 37.10 C214.57 37.10 216.83 37.70 219.10 37.70 C220.60 37.70 222.10 29.20 223.60 29.20 C224.93 29.20 226.27 45.00 227.60 45.00 C230.23 45.00 232.87 45.00 235.50 45.00" fill="none" stroke="#3a86e0" stroke-width="1.8" stroke-linejoin="round" stroke-linecap="round"/></svg>
<div style="position:absolute;left:1018px;top:818.0px;width:104px;height:21.0px;background:#ebebeb;border-radius:7px;"></div>
<div style="position:absolute;left:972px;top:846.0px;width:150px;height:21.0px;background:#ebebeb;border-radius:7px;"></div>
<div style="position:absolute;left:471.00px;width:800px;text-align:right;top:833.22px;font-size:21px;line-height:21px;color:#111;font-weight:400;white-space:nowrap;letter-spacing:-0.4px;margin-right:-0.4px;">2</div>
<div style="position:absolute;left:749.00px;width:800px;text-align:right;top:833.22px;font-size:21px;line-height:21px;color:#111;font-weight:400;white-space:nowrap;letter-spacing:-0.4px;margin-right:-0.4px;">794,25 ₽</div>
<div style="position:absolute;left:997.00px;width:800px;text-align:right;top:833.22px;font-size:21px;line-height:21px;color:#111;font-weight:400;white-space:nowrap;letter-spacing:-0.4px;margin-right:-0.4px;">1 588,49 ₽</div>
<div style="position:absolute;left:1177.00px;width:800px;text-align:right;top:822.02px;font-size:21px;line-height:21px;color:#111;font-weight:400;white-space:nowrap;">Авто</div>
<div style="position:absolute;left:1173.50px;width:800px;text-align:right;top:848.19px;font-size:17.5px;line-height:17.5px;color:#7d8792;font-weight:400;white-space:nowrap;">Минимальная це...</div>
<div style="position:absolute;left:2076px;top:832.0px;width:111px;height:20.5px;background:#ebebeb;border-radius:7px;"></div>
<div style="position:absolute;left:2307px;top:832.0px;width:80px;height:20.5px;background:#ebebeb;border-radius:7px 0 0 7px;"></div>
<div style="position:absolute;left:41.5px;top:948.5px;width:2345.5px;height:1.5px;background:#e9eaec;"></div>
<div style="position:absolute;left:77.0px;top:901.7px;width:23.599999999999994px;height:23.59999999999991px;border:2px solid #b6bec8;border-radius:6px;box-sizing:border-box;"></div>
<div style="position:absolute;left:142px;top:898.5px;width:48px;height:30.0px;background:#eceef1;border:2.2px solid #d3d7dc;border-radius:15px;box-sizing:border-box;"></div>
<div style="position:absolute;left:149.5px;top:905.5px;width:16.0px;height:16.0px;background:#7c8794;border-radius:50%;"></div>
<div style="position:absolute;left:233.00px;top:905.22px;font-size:21px;line-height:21px;color:#2b86e2;font-weight:400;white-space:nowrap;">Копия На группы новые крео</div>
<div style="position:absolute;left:603.5px;top:907.0px;width:13.0px;height:13.0px;background:#b3b3b3;border-radius:50%;"></div>
<div style="position:absolute;left:631.50px;top:905.22px;font-size:21px;line-height:21px;color:#111;font-weight:400;white-space:nowrap;letter-spacing:-0.12px;">Группа остановлена</div>
<div style="position:absolute;left:979px;top:890.0px;width:143px;height:21.0px;background:#ebebeb;border-radius:7px;"></div>
<div style="position:absolute;left:972px;top:918.0px;width:150px;height:21.0px;background:#ebebeb;border-radius:7px;"></div>
<div style="position:absolute;left:471.00px;width:800px;text-align:right;top:905.22px;font-size:21px;line-height:21px;color:#111;font-weight:400;white-space:nowrap;letter-spacing:-0.4px;margin-right:-0.4px;">0</div>
<div style="position:absolute;left:749.00px;width:800px;text-align:right;top:905.22px;font-size:21px;line-height:21px;color:#111;font-weight:400;white-space:nowrap;letter-spacing:-0.4px;margin-right:-0.4px;">0,00 ₽</div>
<div style="position:absolute;left:997.00px;width:800px;text-align:right;top:905.22px;font-size:21px;line-height:21px;color:#111;font-weight:400;white-space:nowrap;letter-spacing:-0.4px;margin-right:-0.4px;">0,00 ₽</div>
<div style="position:absolute;left:1177.00px;width:800px;text-align:right;top:894.02px;font-size:21px;line-height:21px;color:#111;font-weight:400;white-space:nowrap;">Авто</div>
<div style="position:absolute;left:1173.50px;width:800px;text-align:right;top:920.19px;font-size:17.5px;line-height:17.5px;color:#7d8792;font-weight:400;white-space:nowrap;">Минимальная це...</div>
<div style="position:absolute;left:2047px;top:904.0px;width:140px;height:20.5px;background:#ebebeb;border-radius:7px;"></div>
<div style="position:absolute;left:2319px;top:904.0px;width:68px;height:20.5px;background:#ebebeb;border-radius:7px 0 0 7px;"></div>
<div style="position:absolute;left:41.5px;top:1020.5px;width:2345.5px;height:1.5px;background:#e9eaec;"></div>
<div style="position:absolute;left:77.0px;top:973.7px;width:23.599999999999994px;height:23.59999999999991px;border:2px solid #b6bec8;border-radius:6px;box-sizing:border-box;"></div>
<div style="position:absolute;left:142px;top:970.5px;width:48px;height:30.0px;background:#eceef1;border:2.2px solid #d3d7dc;border-radius:15px;box-sizing:border-box;"></div>
<div style="position:absolute;left:149.5px;top:977.5px;width:16.0px;height:16.0px;background:#7c8794;border-radius:50%;"></div>
<div style="position:absolute;left:233.00px;top:977.22px;font-size:21px;line-height:21px;color:#2b86e2;font-weight:400;white-space:nowrap;">Копия Гео новые крео</div>
<div style="position:absolute;left:603.5px;top:979.0px;width:13.0px;height:13.0px;background:#b3b3b3;border-radius:50%;"></div>
<div style="position:absolute;left:631.50px;top:977.22px;font-size:21px;line-height:21px;color:#111;font-weight:400;white-space:nowrap;letter-spacing:-0.12px;">Группа остановлена</div>
<div style="position:absolute;left:1000px;top:962.0px;width:122px;height:21.0px;background:#ebebeb;border-radius:7px;"></div>
<div style="position:absolute;left:972px;top:990.0px;width:150px;height:21.0px;background:#ebebeb;border-radius:7px;"></div>
<div style="position:absolute;left:471.00px;width:800px;text-align:right;top:977.22px;font-size:21px;line-height:21px;color:#111;font-weight:400;white-space:nowrap;letter-spacing:-0.4px;margin-right:-0.4px;">0</div>
<div style="position:absolute;left:749.00px;width:800px;text-align:right;top:977.22px;font-size:21px;line-height:21px;color:#111;font-weight:400;white-space:nowrap;letter-spacing:-0.4px;margin-right:-0.4px;">0,00 ₽</div>
<div style="position:absolute;left:997.00px;width:800px;text-align:right;top:977.22px;font-size:21px;line-height:21px;color:#111;font-weight:400;white-space:nowrap;letter-spacing:-0.4px;margin-right:-0.4px;">0,00 ₽</div>
<div style="position:absolute;left:1177.00px;width:800px;text-align:right;top:966.02px;font-size:21px;line-height:21px;color:#111;font-weight:400;white-space:nowrap;">Авто</div>
<div style="position:absolute;left:1173.50px;width:800px;text-align:right;top:992.19px;font-size:17.5px;line-height:17.5px;color:#7d8792;font-weight:400;white-space:nowrap;">Минимальная це...</div>
<div style="position:absolute;left:2133px;top:976.0px;width:54px;height:20.5px;background:#ebebeb;border-radius:7px;"></div>
<div style="position:absolute;left:2298px;top:976.0px;width:89px;height:20.5px;background:#ebebeb;border-radius:7px 0 0 7px;"></div>
<div style="position:absolute;left:41.5px;top:1092.5px;width:2345.5px;height:1.5px;background:#e9eaec;"></div>
<div style="position:absolute;left:77.0px;top:1045.7px;width:23.599999999999994px;height:23.59999999999991px;border:2px solid #b6bec8;border-radius:6px;box-sizing:border-box;"></div>
<div style="position:absolute;left:142px;top:1042.5px;width:48px;height:30.0px;background:#eceef1;border:2.2px solid #d3d7dc;border-radius:15px;box-sizing:border-box;"></div>
<div style="position:absolute;left:149.5px;top:1049.5px;width:16.0px;height:16.0px;background:#7c8794;border-radius:50%;"></div>
<div style="position:absolute;left:233.00px;top:1049.22px;font-size:21px;line-height:21px;color:#2b86e2;font-weight:400;white-space:nowrap;">На группы новые крео</div>
<div style="position:absolute;left:603.5px;top:1051.0px;width:13.0px;height:13.0px;background:#b3b3b3;border-radius:50%;"></div>
<div style="position:absolute;left:631.50px;top:1049.22px;font-size:21px;line-height:21px;color:#111;font-weight:400;white-space:nowrap;letter-spacing:-0.12px;">Группа остановлена</div>
<div style="position:absolute;left:1069px;top:1034.0px;width:53px;height:21.0px;background:#ebebeb;border-radius:7px;"></div>
<div style="position:absolute;left:972px;top:1062.0px;width:150px;height:21.0px;background:#ebebeb;border-radius:7px;"></div>
<div style="position:absolute;left:471.00px;width:800px;text-align:right;top:1049.22px;font-size:21px;line-height:21px;color:#111;font-weight:400;white-space:nowrap;letter-spacing:-0.4px;margin-right:-0.4px;">0</div>
<div style="position:absolute;left:749.00px;width:800px;text-align:right;top:1049.22px;font-size:21px;line-height:21px;color:#111;font-weight:400;white-space:nowrap;letter-spacing:-0.4px;margin-right:-0.4px;">0,00 ₽</div>
<div style="position:absolute;left:997.00px;width:800px;text-align:right;top:1049.22px;font-size:21px;line-height:21px;color:#111;font-weight:400;white-space:nowrap;letter-spacing:-0.4px;margin-right:-0.4px;">0,00 ₽</div>
<div style="position:absolute;left:1177.00px;width:800px;text-align:right;top:1038.02px;font-size:21px;line-height:21px;color:#111;font-weight:400;white-space:nowrap;">Авто</div>
<div style="position:absolute;left:1173.50px;width:800px;text-align:right;top:1064.19px;font-size:17.5px;line-height:17.5px;color:#7d8792;font-weight:400;white-space:nowrap;">Минимальная це...</div>
<div style="position:absolute;left:2100px;top:1048.0px;width:87px;height:20.5px;background:#ebebeb;border-radius:7px;"></div>
<div style="position:absolute;left:2350px;top:1048.0px;width:37px;height:20.5px;background:#ebebeb;border-radius:7px 0 0 7px;"></div>
<div style="position:absolute;left:41.5px;top:1164.5px;width:2345.5px;height:1.5px;background:#e9eaec;"></div>
<div style="position:absolute;left:77.0px;top:1117.7px;width:23.599999999999994px;height:23.59999999999991px;border:2px solid #b6bec8;border-radius:6px;box-sizing:border-box;"></div>
<div style="position:absolute;left:142px;top:1114.5px;width:48px;height:30.0px;background:#eceef1;border:2.2px solid #d3d7dc;border-radius:15px;box-sizing:border-box;"></div>
<div style="position:absolute;left:149.5px;top:1121.5px;width:16.0px;height:16.0px;background:#7c8794;border-radius:50%;"></div>
<div style="position:absolute;left:233.00px;top:1121.22px;font-size:21px;line-height:21px;color:#2b86e2;font-weight:400;white-space:nowrap;">Позитив 2</div>
<div style="position:absolute;left:603.5px;top:1123.0px;width:13.0px;height:13.0px;background:#b3b3b3;border-radius:50%;"></div>
<div style="position:absolute;left:631.50px;top:1121.22px;font-size:21px;line-height:21px;color:#111;font-weight:400;white-space:nowrap;letter-spacing:-0.12px;">Группа остановлена</div>
<div style="position:absolute;left:1002px;top:1106.0px;width:120px;height:21.0px;background:#ebebeb;border-radius:7px;"></div>
<div style="position:absolute;left:972px;top:1134.0px;width:150px;height:21.0px;background:#ebebeb;border-radius:7px;"></div>
<div style="position:absolute;left:471.00px;width:800px;text-align:right;top:1121.22px;font-size:21px;line-height:21px;color:#111;font-weight:400;white-space:nowrap;letter-spacing:-0.4px;margin-right:-0.4px;">0</div>
<div style="position:absolute;left:749.00px;width:800px;text-align:right;top:1121.22px;font-size:21px;line-height:21px;color:#111;font-weight:400;white-space:nowrap;letter-spacing:-0.4px;margin-right:-0.4px;">0,00 ₽</div>
<div style="position:absolute;left:997.00px;width:800px;text-align:right;top:1121.22px;font-size:21px;line-height:21px;color:#111;font-weight:400;white-space:nowrap;letter-spacing:-0.4px;margin-right:-0.4px;">0,00 ₽</div>
<div style="position:absolute;left:1177.00px;width:800px;text-align:right;top:1110.02px;font-size:21px;line-height:21px;color:#111;font-weight:400;white-space:nowrap;">Авто</div>
<div style="position:absolute;left:1173.50px;width:800px;text-align:right;top:1136.19px;font-size:17.5px;line-height:17.5px;color:#7d8792;font-weight:400;white-space:nowrap;">Минимальная це...</div>
<div style="position:absolute;left:2134px;top:1120.0px;width:53px;height:20.5px;background:#ebebeb;border-radius:7px;"></div>
<div style="position:absolute;left:2319px;top:1120.0px;width:68px;height:20.5px;background:#ebebeb;border-radius:7px 0 0 7px;"></div>
<div style="position:absolute;left:41.5px;top:1236.5px;width:2345.5px;height:1.5px;background:#e9eaec;"></div>
<div style="position:absolute;left:77.0px;top:1189.7px;width:23.599999999999994px;height:23.59999999999991px;border:2px solid #b6bec8;border-radius:6px;box-sizing:border-box;"></div>
<div style="position:absolute;left:142px;top:1186.5px;width:48px;height:30.0px;background:#eceef1;border:2.2px solid #d3d7dc;border-radius:15px;box-sizing:border-box;"></div>
<div style="position:absolute;left:149.5px;top:1193.5px;width:16.0px;height:16.0px;background:#7c8794;border-radius:50%;"></div>
<div style="position:absolute;left:233.00px;top:1193.22px;font-size:21px;line-height:21px;color:#2b86e2;font-weight:400;white-space:nowrap;">Мин</div>
<div style="position:absolute;left:603.5px;top:1195.0px;width:13.0px;height:13.0px;background:#b3b3b3;border-radius:50%;"></div>
<div style="position:absolute;left:631.50px;top:1193.22px;font-size:21px;line-height:21px;color:#111;font-weight:400;white-space:nowrap;letter-spacing:-0.12px;">Группа остановлена</div>
<div style="position:absolute;left:979px;top:1178.0px;width:143px;height:21.0px;background:#ebebeb;border-radius:7px;"></div>
<div style="position:absolute;left:972px;top:1206.0px;width:150px;height:21.0px;background:#ebebeb;border-radius:7px;"></div>
<div style="position:absolute;left:471.00px;width:800px;text-align:right;top:1193.22px;font-size:21px;line-height:21px;color:#111;font-weight:400;white-space:nowrap;letter-spacing:-0.4px;margin-right:-0.4px;">0</div>
<div style="position:absolute;left:749.00px;width:800px;text-align:right;top:1193.22px;font-size:21px;line-height:21px;color:#111;font-weight:400;white-space:nowrap;letter-spacing:-0.4px;margin-right:-0.4px;">0,00 ₽</div>
<div style="position:absolute;left:997.00px;width:800px;text-align:right;top:1193.22px;font-size:21px;line-height:21px;color:#111;font-weight:400;white-space:nowrap;letter-spacing:-0.4px;margin-right:-0.4px;">0,00 ₽</div>
<div style="position:absolute;left:1177.00px;width:800px;text-align:right;top:1182.02px;font-size:21px;line-height:21px;color:#111;font-weight:400;white-space:nowrap;">Авто</div>
<div style="position:absolute;left:1173.50px;width:800px;text-align:right;top:1208.19px;font-size:17.5px;line-height:17.5px;color:#7d8792;font-weight:400;white-space:nowrap;">Минимальная це...</div>
<div style="position:absolute;left:2073px;top:1192.0px;width:114px;height:20.5px;background:#ebebeb;border-radius:7px;"></div>
<div style="position:absolute;left:2332px;top:1192.0px;width:55px;height:20.5px;background:#ebebeb;border-radius:7px 0 0 7px;"></div>
<div style="position:absolute;left:41.5px;top:1308.5px;width:2345.5px;height:1.5px;background:#e9eaec;"></div>
<div style="position:absolute;left:77.0px;top:1261.7px;width:23.599999999999994px;height:23.59999999999991px;border:2px solid #b6bec8;border-radius:6px;box-sizing:border-box;"></div>
<div style="position:absolute;left:142px;top:1258.5px;width:48px;height:30.0px;background:#eceef1;border:2.2px solid #d3d7dc;border-radius:15px;box-sizing:border-box;"></div>
<div style="position:absolute;left:149.5px;top:1265.5px;width:16.0px;height:16.0px;background:#7c8794;border-radius:50%;"></div>
<div style="position:absolute;left:233.00px;top:1265.22px;font-size:21px;line-height:21px;color:#2b86e2;font-weight:400;white-space:nowrap;">Группы</div>
<div style="position:absolute;left:603.5px;top:1267.0px;width:13.0px;height:13.0px;background:#b3b3b3;border-radius:50%;"></div>
<div style="position:absolute;left:631.50px;top:1265.22px;font-size:21px;line-height:21px;color:#111;font-weight:400;white-space:nowrap;letter-spacing:-0.12px;">2 причины</div>
<div style="position:absolute;left:984px;top:1250.0px;width:138px;height:21.0px;background:#ebebeb;border-radius:7px;"></div>
<div style="position:absolute;left:972px;top:1278.0px;width:150px;height:21.0px;background:#ebebeb;border-radius:7px;"></div>
<div style="position:absolute;left:471.00px;width:800px;text-align:right;top:1265.22px;font-size:21px;line-height:21px;color:#111;font-weight:400;white-space:nowrap;letter-spacing:-0.4px;margin-right:-0.4px;">0</div>
<div style="position:absolute;left:749.00px;width:800px;text-align:right;top:1265.22px;font-size:21px;line-height:21px;color:#111;font-weight:400;white-space:nowrap;letter-spacing:-0.4px;margin-right:-0.4px;">0,00 ₽</div>
<div style="position:absolute;left:997.00px;width:800px;text-align:right;top:1265.22px;font-size:21px;line-height:21px;color:#111;font-weight:400;white-space:nowrap;letter-spacing:-0.4px;margin-right:-0.4px;">0,00 ₽</div>
<div style="position:absolute;left:1177.00px;width:800px;text-align:right;top:1254.02px;font-size:21px;line-height:21px;color:#111;font-weight:400;white-space:nowrap;">Авто</div>
<div style="position:absolute;left:1173.50px;width:800px;text-align:right;top:1280.19px;font-size:17.5px;line-height:17.5px;color:#7d8792;font-weight:400;white-space:nowrap;">Минимальная це...</div>
<div style="position:absolute;left:2067px;top:1264.0px;width:120px;height:20.5px;background:#ebebeb;border-radius:7px;"></div>
<div style="position:absolute;left:2328px;top:1264.0px;width:59px;height:20.5px;background:#ebebeb;border-radius:7px 0 0 7px;"></div>
<div style="position:absolute;left:41.5px;top:1380.5px;width:2345.5px;height:1.5px;background:#e9eaec;"></div>
<div style="position:absolute;left:77.0px;top:1333.7px;width:23.599999999999994px;height:23.59999999999991px;border:2px solid #b6bec8;border-radius:6px;box-sizing:border-box;"></div>
<div style="position:absolute;left:142px;top:1330.5px;width:48px;height:30.0px;background:#eceef1;border:2.2px solid #d3d7dc;border-radius:15px;box-sizing:border-box;"></div>
<div style="position:absolute;left:149.5px;top:1337.5px;width:16.0px;height:16.0px;background:#7c8794;border-radius:50%;"></div>
<div style="position:absolute;left:233.00px;top:1337.22px;font-size:21px;line-height:21px;color:#2b86e2;font-weight:400;white-space:nowrap;">Позитив</div>
<div style="position:absolute;left:603.5px;top:1339.0px;width:13.0px;height:13.0px;background:#b3b3b3;border-radius:50%;"></div>
<div style="position:absolute;left:631.50px;top:1337.22px;font-size:21px;line-height:21px;color:#111;font-weight:400;white-space:nowrap;letter-spacing:-0.12px;">Группа остановлена</div>
<div style="position:absolute;left:1029px;top:1322.0px;width:93px;height:21.0px;background:#ebebeb;border-radius:7px;"></div>
<div style="position:absolute;left:972px;top:1350.0px;width:150px;height:21.0px;background:#ebebeb;border-radius:7px;"></div>
<div style="position:absolute;left:471.00px;width:800px;text-align:right;top:1337.22px;font-size:21px;line-height:21px;color:#111;font-weight:400;white-space:nowrap;letter-spacing:-0.4px;margin-right:-0.4px;">0</div>
<div style="position:absolute;left:749.00px;width:800px;text-align:right;top:1337.22px;font-size:21px;line-height:21px;color:#111;font-weight:400;white-space:nowrap;letter-spacing:-0.4px;margin-right:-0.4px;">0,00 ₽</div>
<div style="position:absolute;left:997.00px;width:800px;text-align:right;top:1337.22px;font-size:21px;line-height:21px;color:#111;font-weight:400;white-space:nowrap;letter-spacing:-0.4px;margin-right:-0.4px;">0,00 ₽</div>
<div style="position:absolute;left:1177.00px;width:800px;text-align:right;top:1326.02px;font-size:21px;line-height:21px;color:#111;font-weight:400;white-space:nowrap;">Авто</div>
<div style="position:absolute;left:1173.50px;width:800px;text-align:right;top:1352.19px;font-size:17.5px;line-height:17.5px;color:#7d8792;font-weight:400;white-space:nowrap;">Минимальная це...</div>
<div style="position:absolute;left:2062px;top:1336.0px;width:125px;height:20.5px;background:#ebebeb;border-radius:7px;"></div>
<div style="position:absolute;left:2325px;top:1336.0px;width:62px;height:20.5px;background:#ebebeb;border-radius:7px 0 0 7px;"></div>
<div style="position:absolute;left:77.0px;top:1405.7px;width:23.599999999999994px;height:23.59999999999991px;border:2px solid #b6bec8;border-radius:6px;box-sizing:border-box;"></div>
<div style="position:absolute;left:142px;top:1402.5px;width:48px;height:30.0px;background:#eceef1;border:2.2px solid #d3d7dc;border-radius:15px;box-sizing:border-box;"></div>
<div style="position:absolute;left:149.5px;top:1409.5px;width:16.0px;height:16.0px;background:#7c8794;border-radius:50%;"></div>
<div style="position:absolute;left:233.00px;top:1409.22px;font-size:21px;line-height:21px;color:#2b86e2;font-weight:400;white-space:nowrap;">Копия НА группы</div>
<div style="position:absolute;left:603.5px;top:1411.0px;width:13.0px;height:13.0px;background:#b3b3b3;border-radius:50%;"></div>
<div style="position:absolute;left:631.50px;top:1409.22px;font-size:21px;line-height:21px;color:#111;font-weight:400;white-space:nowrap;letter-spacing:-0.12px;">Группа остановлена</div>
<div style="position:absolute;left:1032px;top:1394.0px;width:90px;height:21.0px;background:#ebebeb;border-radius:7px;"></div>
<div style="position:absolute;left:972px;top:1422.0px;width:150px;height:21.0px;background:#ebebeb;border-radius:7px;"></div>
<div style="position:absolute;left:471.00px;width:800px;text-align:right;top:1409.22px;font-size:21px;line-height:21px;color:#111;font-weight:400;white-space:nowrap;letter-spacing:-0.4px;margin-right:-0.4px;">0</div>
<div style="position:absolute;left:749.00px;width:800px;text-align:right;top:1409.22px;font-size:21px;line-height:21px;color:#111;font-weight:400;white-space:nowrap;letter-spacing:-0.4px;margin-right:-0.4px;">0,00 ₽</div>
<div style="position:absolute;left:997.00px;width:800px;text-align:right;top:1409.22px;font-size:21px;line-height:21px;color:#111;font-weight:400;white-space:nowrap;letter-spacing:-0.4px;margin-right:-0.4px;">0,00 ₽</div>
<div style="position:absolute;left:1177.00px;width:800px;text-align:right;top:1398.02px;font-size:21px;line-height:21px;color:#111;font-weight:400;white-space:nowrap;">Авто</div>
<div style="position:absolute;left:1173.50px;width:800px;text-align:right;top:1424.19px;font-size:17.5px;line-height:17.5px;color:#7d8792;font-weight:400;white-space:nowrap;">Минимальная це...</div>
<div style="position:absolute;left:2109px;top:1408.0px;width:78px;height:20.5px;background:#ebebeb;border-radius:7px;"></div>
<div style="position:absolute;left:2299px;top:1408.0px;width:88px;height:20.5px;background:#ebebeb;border-radius:7px 0 0 7px;"></div>
<div style="position:absolute;left:2387px;top:518.5px;width:27.5px;height:925.5px;background:#fafafa;"></div>
<svg style="position:absolute;left:2390px;top:524px;" width="24" height="20" viewBox="0 0 24 20"><path d="M4.5 14.5 L19.5 14.5 L12 4.5 Z" fill="#8b8b8b" stroke="#8b8b8b" stroke-width="3" stroke-linejoin="round"/></svg>
<div style="position:absolute;left:2393px;top:554px;width:18px;height:105px;background:#8b8b8b;border-radius:9px;"></div>
<svg style="position:absolute;left:2390px;top:1417px;" width="24" height="20" viewBox="0 0 24 20"><path d="M4.5 5.5 L19.5 5.5 L12 16 Z" fill="#8b8b8b" stroke="#8b8b8b" stroke-width="3" stroke-linejoin="round"/></svg>
<div style="position:absolute;left:41.5px;top:1444px;width:2373.0px;height:28px;background:#fafafa;"></div>
<svg style="position:absolute;left:47px;top:1447px;" width="20" height="24" viewBox="0 0 20 24"><path d="M15.5 4.5 L15.5 19.5 L4.5 12 Z" fill="#8b8b8b" stroke="#8b8b8b" stroke-width="3" stroke-linejoin="round"/></svg>
<div style="position:absolute;left:77px;top:1450px;width:542px;height:18px;background:#8b8b8b;border-radius:9px;"></div>
<svg style="position:absolute;left:2360px;top:1447px;" width="20" height="24" viewBox="0 0 20 24"><path d="M5.5 4.5 L5.5 19.5 L16.5 12 Z" fill="#8b8b8b" stroke="#8b8b8b" stroke-width="3" stroke-linejoin="round"/></svg>
<div style="position:absolute;left:41.5px;top:1472px;width:2373.0px;height:1.5px;background:#e5e6e8;"></div>
<div style="position:absolute;left:41.5px;top:1473.5px;width:2373.0px;height:66.5px;background:#f8f8f8;"></div>
<div style="position:absolute;left:41.5px;top:1540px;width:2373.0px;height:1.2000000000000455px;background:#e6e7e9;"></div>
<div style="position:absolute;left:233.00px;top:1497.92px;font-size:21px;line-height:21px;color:#333;font-weight:400;white-space:nowrap;">Итого: 105 групп</div>
<div style="position:absolute;left:1251px;top:1508px;width:21px;height:2px;background:#333;"></div>
<div style="position:absolute;left:1528px;top:1508px;width:21px;height:2px;background:#333;"></div>
<div style="position:absolute;left:1776px;top:1508px;width:21px;height:2px;background:#333;"></div>
<svg style="position:absolute;left:2354px;top:1510.8px;" width="74" height="74" viewBox="0 0 74 74"><circle cx="37" cy="37" r="36.9" fill="#2787e8"/><ellipse cx="43.5" cy="38.5" rx="12.5" ry="11" fill="#fff"/><path d="M52.7 46.2 L54.8 52.8 L46.2 49.2 Z" fill="#fff"/><path d="M23.4 40.6 L21.3 46.9 L29.8 43.6 Z" fill="#2787e8" stroke="#2787e8" stroke-width="5" stroke-linejoin="round"/><ellipse cx="33.4" cy="32.8" rx="13.5" ry="11.4" fill="#fff" stroke="#2787e8" stroke-width="4.6"/><path d="M23.4 40.6 L21.3 46.9 L29.8 43.6 Z" fill="#fff"/><ellipse cx="33.4" cy="32.8" rx="13.5" ry="11.4" fill="#fff"/></svg></body></html>
